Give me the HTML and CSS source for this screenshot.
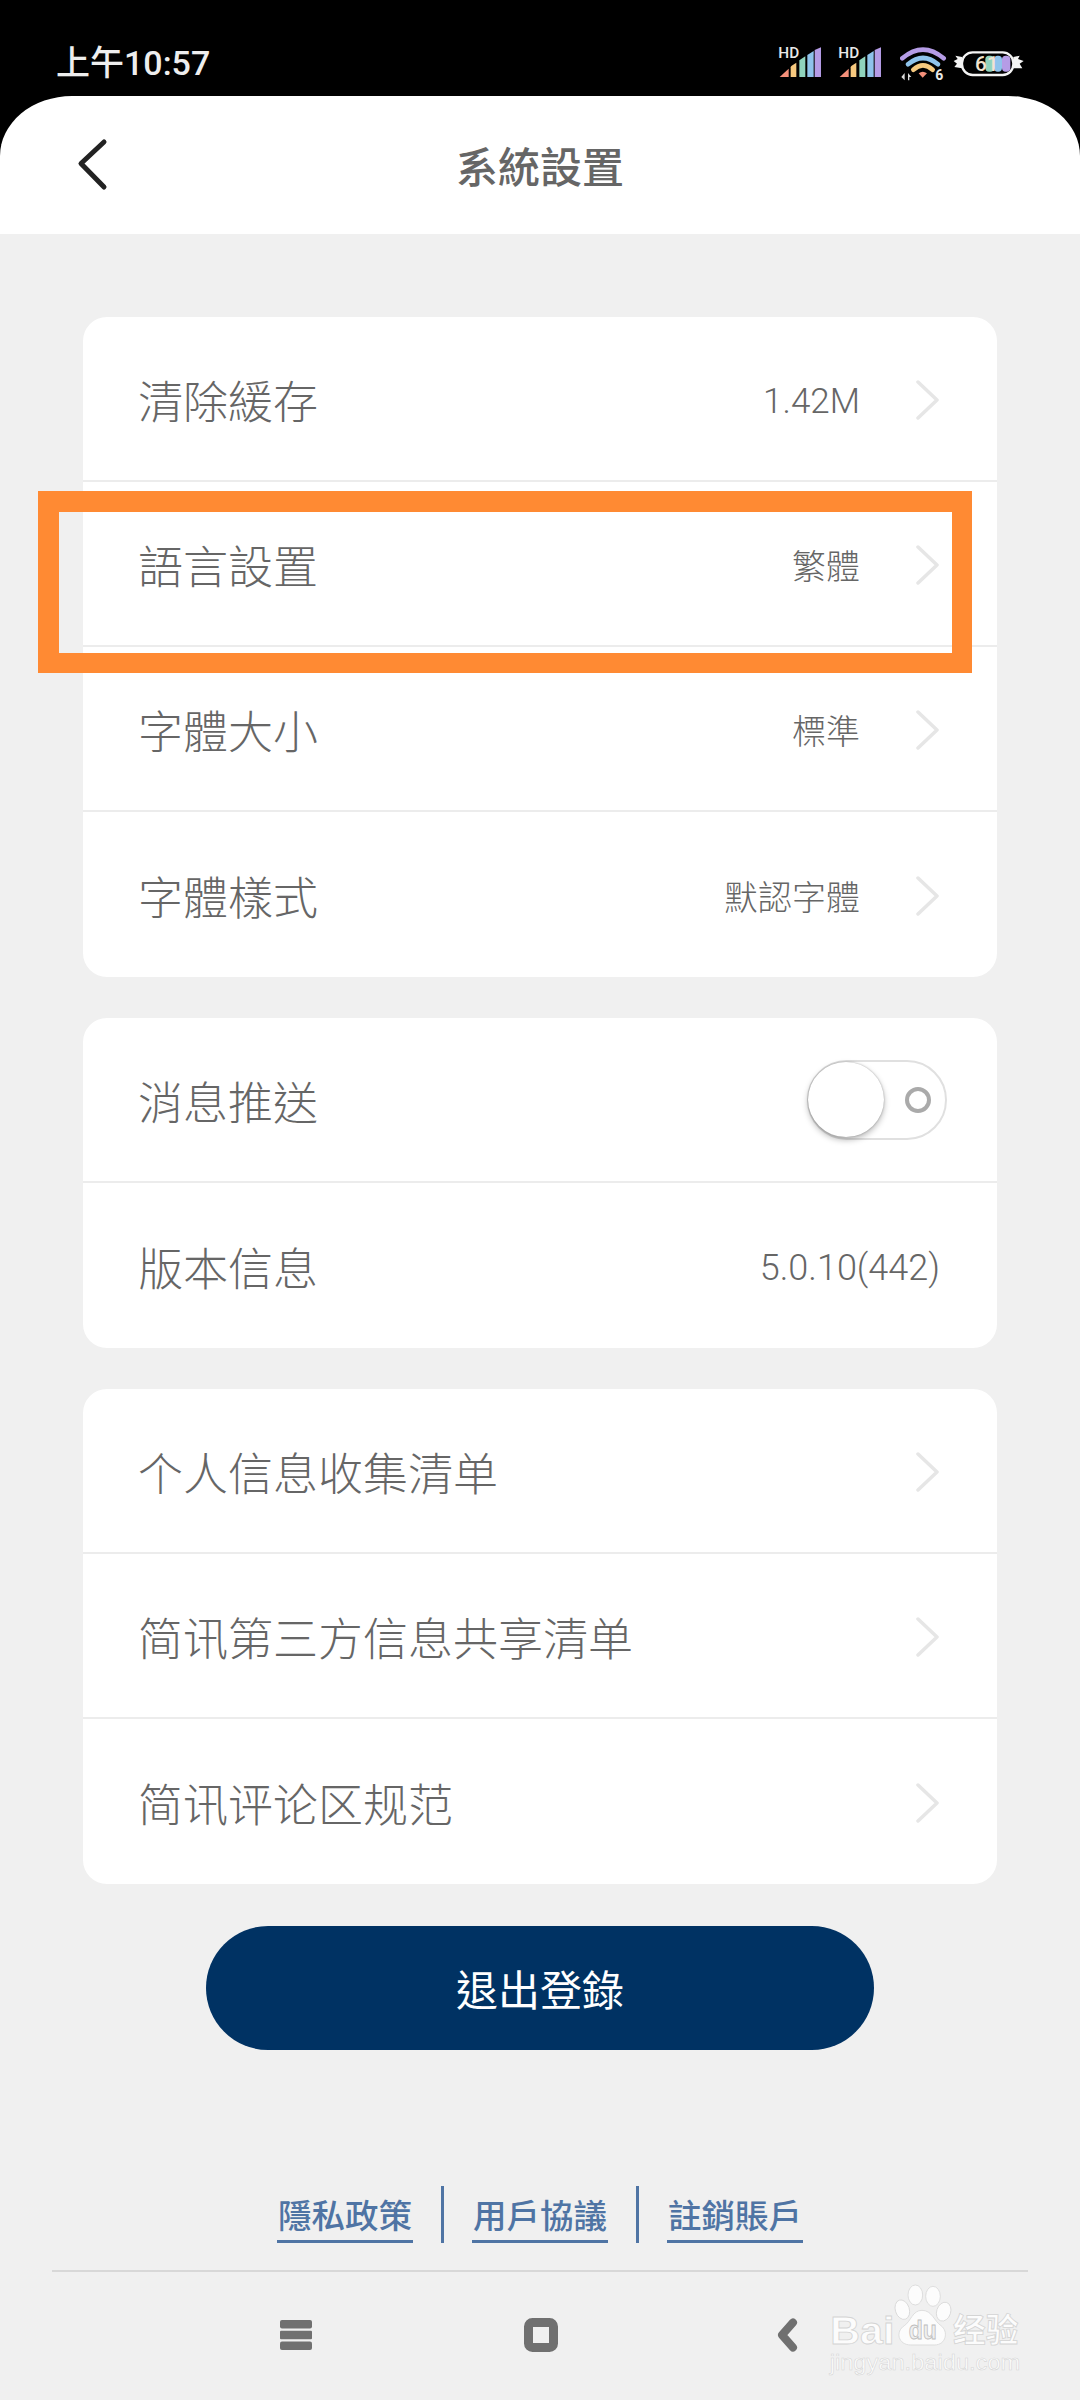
FILE: index.html
```html
<!DOCTYPE html>
<html lang="zh-Hant">
<head>
<meta charset="utf-8">
<title>系統設置</title>
<link rel="stylesheet" href="styles.css">
</head>
<body>
<div class="page">
  <div class="top">
    <div class="status">
      <span class="time">上午10:57</span>
      <div class="status-icons">
        <svg class="sig" viewBox="110 70 140 120"><text x="114" y="116" class="hd">HD</text><path class="b1" d="M118 172 L145 147 V172Z"/><path class="b2" d="M151 172 V143 Q151 140 154 138 L168 129 V172Z"/><path class="b3" d="M177 172 V122 L195 110 V172Z"/><path class="b4" d="M201 172 V106 L220 94 V172Z"/><path class="b5" d="M223 172 V91 L242 83 V172Z"/></svg>
        <svg class="sig sig-last" viewBox="290 70 140 120"><text x="294" y="116" class="hd">HD</text><path class="b1" d="M298 172 L325 147 V172Z"/><path class="b2" d="M331 172 V143 Q331 140 334 138 L348 129 V172Z"/><path class="b3" d="M357 172 V122 L375 110 V172Z"/><path class="b4" d="M381 172 V106 L400 94 V172Z"/><path class="b5" d="M403 172 V91 L422 83 V172Z"/></svg>
        <svg class="wifi" viewBox="480 70 140 120"><path class="arc a1" d="M487 116 Q549 64 611 116"/><path class="arc a2" d="M504 134 Q549 96 594 134"/><path class="arc a3" d="M520 150 Q549 124 578 150"/><path class="dot" d="M536 161 Q548 152 561 161 L548 174Z"/><path class="tri" d="M484 172 L494 160 V182Z M504 182 V160 L514 172 H508 V182Z"/><text x="586" y="182" class="six">6</text></svg>
        <svg class="batt" viewBox="635 70 220 120"><path class="wrap" d="M665 112 L645 108 L652 118 L640 124 L650 132 L642 142 L665 146 M819 112 L838 108 L833 118 L850 124 L838 132 L846 146 L819 146"/><rect class="shell" x="665" y="98" width="154" height="68" rx="32"/><rect class="c2" x="735" y="108" width="26" height="48" rx="11"/><rect class="c3" x="761" y="108" width="24" height="48" rx="11"/><rect class="c4" x="785" y="108" width="25" height="48" rx="11"/><text x="704" y="155" class="pct">61</text></svg>
      </div>
    </div>
    <header class="head">
      <svg class="back" viewBox="0 0 40 60"><path d="M32 5 L9 26.500 L32 50"/></svg>
      <h1 class="title">系統設置</h1>
    </header>
  </div>

  <main class="main">
    <section class="card">
      <div class="row"><span class="label">清除緩存</span><span class="value short">1.42M</span><svg class="chev" viewBox="0 0 24 40"><path d="M2 2 L21 20 L2 38"/></svg></div>
      <div class="row"><span class="label">語言設置</span><span class="value">繁體</span><svg class="chev" viewBox="0 0 24 40"><path d="M2 2 L21 20 L2 38"/></svg></div>
      <div class="row"><span class="label">字體大小</span><span class="value">標準</span><svg class="chev" viewBox="0 0 24 40"><path d="M2 2 L21 20 L2 38"/></svg></div>
      <div class="row"><span class="label">字體樣式</span><span class="value">默認字體</span><svg class="chev" viewBox="0 0 24 40"><path d="M2 2 L21 20 L2 38"/></svg></div>
    </section>
    <section class="card">
      <div class="row"><span class="label">消息推送</span><span class="toggle"><span class="knob"></span><span class="ring"></span></span></div>
      <div class="row"><span class="label">版本信息</span><span class="value version">5.0.10(442)</span></div>
    </section>
    <section class="card">
      <div class="row"><span class="label">个人信息收集清单</span><svg class="chev" viewBox="0 0 24 40"><path d="M2 2 L21 20 L2 38"/></svg></div>
      <div class="row"><span class="label">简讯第三方信息共享清单</span><svg class="chev" viewBox="0 0 24 40"><path d="M2 2 L21 20 L2 38"/></svg></div>
      <div class="row"><span class="label">简讯评论区规范</span><svg class="chev" viewBox="0 0 24 40"><path d="M2 2 L21 20 L2 38"/></svg></div>
    </section>
    <button class="logout">退出登錄</button>
  </main>

  <nav class="links">
    <a class="link">隱私政策</a><i class="sep"></i><a class="link">用戶協議</a><i class="sep"></i><a class="link">註銷賬戶</a>
  </nav>

  <footer class="nav">
    <svg class="nav-menu" viewBox="0 0 32 30"><rect y="0" width="32" height="8.5" rx="2"/><rect y="10.7" width="32" height="8.5" rx="1"/><rect y="21.4" width="32" height="8.5" rx="2"/></svg>
    <svg class="nav-home" viewBox="0 0 34 34"><rect x="4.500" y="4.500" width="25" height="25" rx="4"/></svg>
    <svg class="nav-back" viewBox="0 0 22 34"><path d="M17 4.500 L6 17 L17 29.500"/></svg>
  </footer>

  <div class="mark"></div>

  <svg class="wm" viewBox="140 40 590 290">
    <g class="paw">
      <ellipse cx="405" cy="76" rx="22" ry="30"/>
      <ellipse cx="458" cy="80" rx="22" ry="30"/>
      <ellipse cx="366" cy="120" rx="21" ry="30" transform="rotate(-18 366 120)"/>
      <ellipse cx="490" cy="126" rx="21" ry="29" transform="rotate(18 490 126)"/>
      <path d="M425 122 C455 122 462 155 482 168 C505 185 498 226 462 226 H392 C352 226 345 185 372 168 C392 155 396 122 425 122Z"/>
    </g>
    <text x="150" y="224" class="wm-bai" textLength="192" lengthAdjust="spacingAndGlyphs">Bai</text>
    <text x="385" y="208" class="wm-du" textLength="84" lengthAdjust="spacingAndGlyphs">du</text>
    <text x="518" y="218" class="wm-cn" textLength="196" lengthAdjust="spacingAndGlyphs">经验</text>
    <text x="148" y="300" class="wm-url" textLength="572" lengthAdjust="spacingAndGlyphs">jingyan.baidu.com</text>
  </svg>
</div>
</body>
</html>
```
FILE: styles.css
```css
* { box-sizing: border-box; }
html, body { margin: 0; padding: 0; }
body { font-family: "Noto Sans CJK TC", "Noto Sans CJK SC", "Noto Sans", sans-serif; }
.page { position: relative; width: 1080px; height: 2400px; background: #f0f0f0; overflow: hidden; }

.top { background: #000; }
.status { height: 96px; display: flex; justify-content: space-between; padding: 43px 55px 0 56px; }
.time { color: #eee; font: 500 34px/40px Roboto, "Noto Sans CJK SC", sans-serif; }
.status-icons { display: flex; height: 40px; }
.status-icons svg { height: 40px; display: block; }
.sig { width: 46.67px; margin-right: 13.33px; }
.sig-last { margin-right: 16.67px; }
.wifi { width: 46.67px; margin-right: 5px; }
.batt { width: 73.33px; }
.hd { font: 500 46px Roboto, sans-serif; fill: #e8e8e8; }
.b1 { fill: #f4907a; } .b2 { fill: #f6c97f; } .b3 { fill: #8fd3bd; } .b4 { fill: #8fc3ec; } .b5 { fill: #b59ce6; }
.arc { fill: none; stroke-width: 14; stroke-linecap: round; }
.a1 { stroke: #b59ce6; } .a2 { stroke: #8fc3ec; } .a3 { stroke: #f6c97f; }
.dot { fill: #f4907a; }
.tri { fill: #ddd; }
.six { font: 700 42px Roboto, sans-serif; fill: #e8e8e8; }
.wrap { fill: #f4f4f4; }
.shell { fill: #000; stroke: #f4f4f4; stroke-width: 7; }
.c2 { fill: #8fd3bd; } .c3 { fill: #8fc3ec; } .c4 { fill: #b59ce6; }
.pct { font: 500 62px Roboto, sans-serif; fill: #f2e4cf; }

.head { position: relative; height: 138px; background: #fff; border-radius: 72px 72px 0 0 / 60px 60px 0 0; display: flex; align-items: center; justify-content: center; }
.title { margin: 0; font-size: 42px; line-height: 60px; font-weight: 500; color: #666; }
.back { position: absolute; left: 72px; top: 41px; width: 40px; height: 60px; }
.back path { fill: none; stroke: #222; stroke-width: 5px; stroke-linecap: round; stroke-linejoin: round; }

.main { padding: 83px 83px 0 83px; display: flex; flex-direction: column; align-items: stretch; }
.card { background: #fff; border-radius: 24px; margin-bottom: 41px; display: flex; flex-direction: column; }
.row { height: 165px; padding: 0 57px 0 55px; display: flex; align-items: center; border-bottom: 2px solid #ececec; }
.row:last-child { border-bottom: 0; height: 165px; }
.label { flex: 1; font-size: 45px; font-weight: 300; color: #666; line-height: 60px; position: relative; top: 1px; }
.value { font: 300 34px/46px Roboto, "Noto Sans CJK TC", sans-serif; color: #666; margin-right: 56px; position: relative; top: 3px; }
.short { font-size: 35px; }
.version { font-size: 36px; margin-right: 0; top: 2px; }
.chev { width: 24px; height: 40px; flex: none; position: relative; top: 1px; }
.chev path { fill: none; stroke: #e6e6e6; stroke-width: 3.500px; stroke-linecap: round; stroke-linejoin: round; }

.toggle { position: relative; width: 140px; height: 80px; border: 2.500px solid #e0e0e0; border-radius: 40px; margin-right: -7px; }
.knob { position: absolute; left: -1px; top: 0; width: 76px; height: 75px; border-radius: 50%; background: #fff; box-shadow: 0 3px 6px rgba(0,0,0,.28), 0 0 2px rgba(0,0,0,.3); }
.ring { position: absolute; left: 96px; top: 25px; width: 26px; height: 26px; border-radius: 50%; border: 4.500px solid #aaa; }

.logout { align-self: center; margin-top: 1px; width: 668px; height: 124px; border: 0; border-radius: 62px; background: #003263; color: #fff; font: 400 42px/60px "Noto Sans CJK TC", sans-serif; }

.links { position: absolute; left: 277px; top: 2186px; display: flex; align-items: flex-start; height: 57px; }
.link { display: block; width: 136px; height: 57px; border-bottom: 3.500px solid #4f74a4; text-align: center; color: #4f74a4; font-size: 33.500px; font-weight: 500; line-height: 56px; white-space: nowrap; }
.sep { display: block; width: 3px; height: 57px; margin: 0 28px 0 28px; background: #4f74a4; }

.nav { position: absolute; left: 52px; top: 2270px; width: 976px; height: 130px; border-top: 2px solid #d8d8d8; }
.nav svg { position: absolute; display: block; }
.nav-menu { left: 228px; top: 48px; width: 32px; height: 30px; fill: #707070; }
.nav-home { left: 472px; top: 46px; width: 34px; height: 34px; }
.nav-home rect { fill: none; stroke: #707070; stroke-width: 9; }
.nav-back { left: 724px; top: 46px; width: 22px; height: 34px; }
.nav-back path { fill: none; stroke: #707070; stroke-width: 8; stroke-linejoin: round; stroke-linecap: round; }

.mark { position: absolute; left: 38px; top: 491px; width: 934px; height: 182px; border: solid #ff8a33; border-width: 21px 20px 20px 21px; }

.wm { position: absolute; left: 826.67px; top: 2283.33px; width: 196.67px; height: 96.67px; }
.paw { fill: #fcfcfc; stroke: #d8d8d8; stroke-width: 2.500; }
.wm-bai { font: 700 118px "Liberation Sans", sans-serif; fill: #fcfcfc; stroke: #d4d4d4; stroke-width: 2.500; }
.wm-du { font: 700 76px "Liberation Sans", sans-serif; fill: #efefef; stroke: #bdbdbd; stroke-width: 2.500; }
.wm-cn { font: 700 98px "Noto Sans CJK SC", sans-serif; fill: #fcfcfc; stroke: #d4d4d4; stroke-width: 2.500; }
.wm-url { font: 400 66px "Liberation Sans", sans-serif; fill: #fcfcfc; stroke: #d4d4d4; stroke-width: 1.500; }
```
